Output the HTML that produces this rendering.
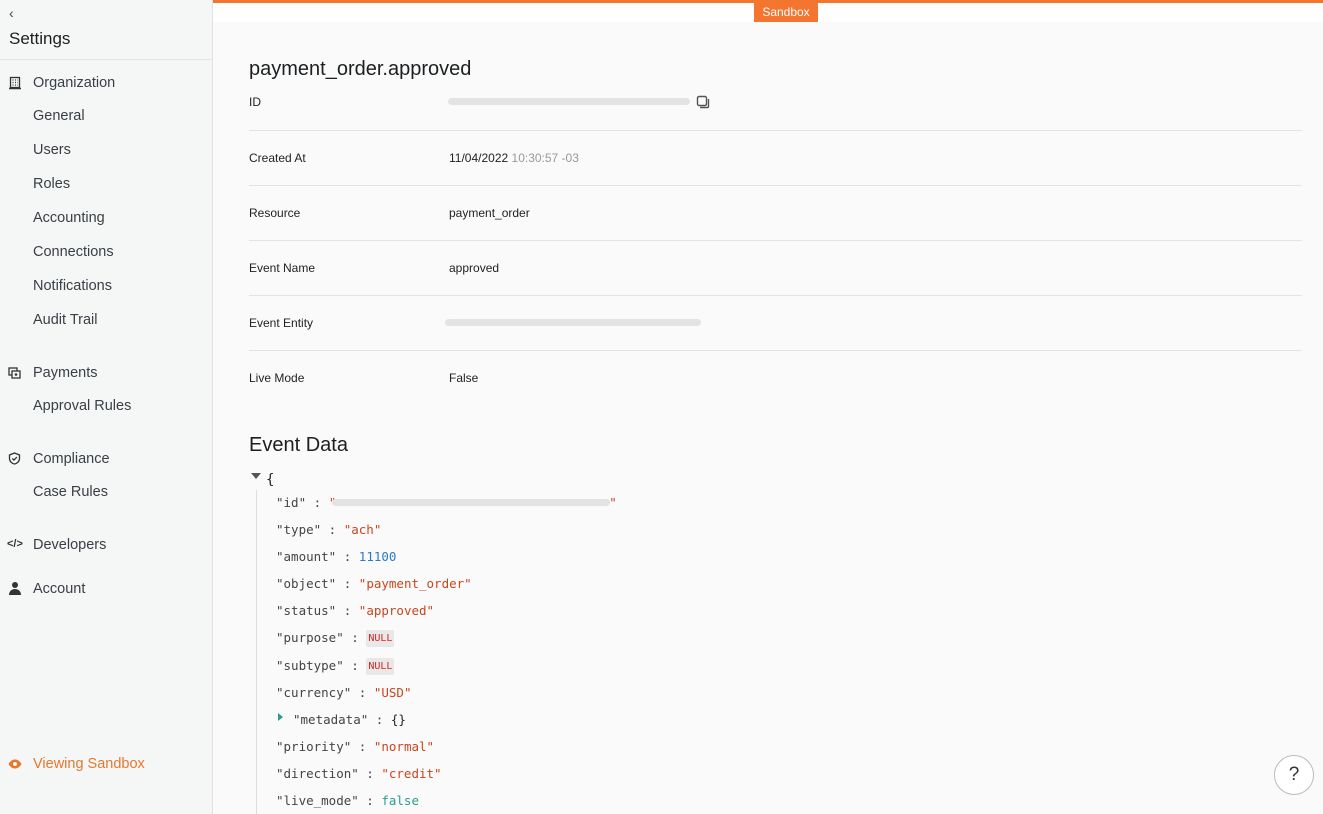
<!DOCTYPE html>
<html style="width:1323px;height:814px;overflow:hidden"><head><meta charset="utf-8"><style>
*{margin:0;padding:0;box-sizing:border-box}
body{width:1323px;height:814px;overflow:hidden;font-family:"Liberation Sans",sans-serif;background:#fafafa;position:relative;color:#222}
.side{position:absolute;left:0;top:0;width:213px;height:814px;background:#f5f6f6;border-right:1px solid #dfe2e3}
.side .back{position:absolute;left:9px;top:5px;font-size:14px;color:#444}
.side h1{position:absolute;left:9px;top:29px;font-size:17px;font-weight:normal;color:#1c1f21}
.side .hr{position:absolute;left:0;top:59px;width:212px;border-top:1px solid #e2e5e6}
.it{position:absolute;left:33px;font-size:14.5px;color:#3a3f44}
.ic{position:absolute;left:8px}
.top{position:absolute;left:213px;top:0;right:0;height:22px;background:#fff;border-top:3px solid #f47530}
.badge{position:absolute;left:754px;top:3px;width:64px;height:19px;background:#f47530;color:#fff;font-size:12px;text-align:center;line-height:18px}
.title{position:absolute;left:249px;top:58px;font-size:20px;color:#1c1f21}
.row{position:absolute;left:249px;width:1053px;font-size:12px;color:#222}
.row .v{position:absolute;left:200px;top:0}
.line{position:absolute;left:249px;width:1053px;border-top:1px solid #e3e3e3}
.blur{position:absolute;height:7px;border-radius:4px;background:#e3e3e3}
.ed{position:absolute;left:249px;top:434px;font-size:20px;color:#1c1f21}
.j{position:absolute;left:276px;font-family:"DejaVu Sans Mono","Liberation Mono",monospace;font-size:12.5px;color:#444;white-space:pre}
.s{color:#c8461e}.n{color:#2a7ac8}.b{color:#2a9d8f}
.null{display:inline-block;background:#e8e8e8;color:#d22;font-size:10px;padding:3px 2px;border-radius:2px;vertical-align:1px}
.vline{position:absolute;left:256px;top:490px;height:330px;border-left:1px solid #ddd}
.help{position:absolute;left:1274px;top:755px;width:40px;height:40px;border-radius:50%;border:1px solid #bbb;background:#fff;text-align:center;line-height:38px;font-size:19px;color:#333}
</style></head><body>
<div class="side">
<div class="back">‹</div>
<h1>Settings</h1>
<div class="hr"></div>
<svg class="ic" style="top:76px" width="14" height="14" viewBox="0 0 14 14"><rect x="2.5" y="1.5" width="9" height="10" fill="none" stroke="#333" stroke-width="1.3"/><path d="M4.5 4h1M7 4h1M9 4h.5M4.5 6.5h1M7 6.5h1M9 6.5h.5M4.5 9h1M7 9h1M9 9h.5" stroke="#333" stroke-width="1.3"/><path d="M1 12.5h12" stroke="#333" stroke-width="1.5"/></svg>
<div class="it" style="top:75px">Organization</div>
<div class="it" style="top:108px">General</div>
<div class="it" style="top:142px">Users</div>
<div class="it" style="top:176px">Roles</div>
<div class="it" style="top:210px">Accounting</div>
<div class="it" style="top:244px">Connections</div>
<div class="it" style="top:278px">Notifications</div>
<div class="it" style="top:312px">Audit Trail</div>
<svg class="ic" style="top:367px" width="14" height="13" viewBox="0 0 14 13"><rect x="1" y="1" width="8" height="7" fill="none" stroke="#333" stroke-width="1.3"/><rect x="4" y="4" width="8" height="7" fill="#f5f6f6" stroke="#333" stroke-width="1.3"/><circle cx="8" cy="7.5" r="1.3" fill="#333"/></svg>
<div class="it" style="top:365px">Payments</div>
<div class="it" style="top:398px">Approval Rules</div>
<svg class="ic" style="top:452px" width="13" height="13" viewBox="0 0 13 13"><path d="M6.5 1L11.5 3v3.5c0 3-2.5 5-5 5.5-2.5-.5-5-2.5-5-5.5V3z" fill="none" stroke="#333" stroke-width="1.3"/><path d="M4.3 6.5l1.6 1.6 3-3" fill="none" stroke="#333" stroke-width="1.3"/></svg>
<div class="it" style="top:451px">Compliance</div>
<div class="it" style="top:484px">Case Rules</div>
<div style="position:absolute;left:7px;top:538px;font-size:11px;font-weight:bold;color:#333">&lt;/&gt;</div>
<div class="it" style="top:537px">Developers</div>
<svg class="ic" style="top:581px" width="14" height="14" viewBox="0 0 14 14"><circle cx="7" cy="4" r="3" fill="#333"/><path d="M1 14c0-4 3-6 6-6s6 2 6 6z" fill="#333"/></svg>
<div class="it" style="top:581px">Account</div>
<svg class="ic" style="top:759px" width="14" height="10" viewBox="0 0 14 10"><path d="M0.5 5C2.5 1.5 5 0.5 7 0.5s4.5 1 6.5 4.5C11.5 8.5 9 9.5 7 9.5S2.5 8.5.5 5z" fill="#e8772e"/><circle cx="7" cy="5" r="2" fill="#f5f6f6"/></svg>
<div class="it" style="top:756px;color:#e8772e">Viewing Sandbox</div>
</div>
<div class="top"></div>
<div class="badge">Sandbox</div>
<div class="title">payment_order.approved</div>
<div class="row" style="top:95px">ID<div class="blur" style="left:199px;top:3px;width:242px"></div>
<svg style="position:absolute;left:447px;top:0" width="14" height="14" viewBox="0 0 14 14"><rect x="1.5" y="1.5" width="9" height="9" rx="1.5" fill="none" stroke="#555" stroke-width="1.4"/><path d="M12.5 4v7.5a1 1 0 0 1-1 1H4" fill="none" stroke="#555" stroke-width="1.4"/></svg></div>
<div class="line" style="top:130px"></div>
<div class="row" style="top:151px">Created At<div class="v">11/04/2022 <span style="color:#999">10:30:57 -03</span></div></div>
<div class="line" style="top:185px"></div>
<div class="row" style="top:206px">Resource<div class="v">payment_order</div></div>
<div class="line" style="top:240px"></div>
<div class="row" style="top:261px">Event Name<div class="v">approved</div></div>
<div class="line" style="top:295px"></div>
<div class="row" style="top:316px">Event Entity<div class="blur" style="left:196px;top:3px;width:256px"></div></div>
<div class="line" style="top:350px"></div>
<div class="row" style="top:371px">Live Mode<div class="v">False</div></div>
<div class="ed">Event Data</div>
<div style="position:absolute;left:251px;top:473px;width:0;height:0;border-left:5px solid transparent;border-right:5px solid transparent;border-top:6px solid #555"></div>
<div class="j" style="left:266px;top:472px;color:#222;font-size:14px">{</div>
<div class="vline"></div>
<div class="j" style="top:495px">"id" : <span class="s">"</span><span style="display:inline-block;width:273px"></span><span class="s">"</span></div>
<div class="blur" style="left:332px;top:499px;width:278px"></div>
<div class="j" style="top:522px">"type" : <span class="s">"ach"</span></div>
<div class="j" style="top:549px">"amount" : <span class="n">11100</span></div>
<div class="j" style="top:576px">"object" : <span class="s">"payment_order"</span></div>
<div class="j" style="top:603px">"status" : <span class="s">"approved"</span></div>
<div class="j" style="top:630px">"purpose" : <span class="null">NULL</span></div>
<div class="j" style="top:658px">"subtype" : <span class="null">NULL</span></div>
<div class="j" style="top:685px">"currency" : <span class="s">"USD"</span></div>
<div style="position:absolute;left:278px;top:713px;width:0;height:0;border-top:4px solid transparent;border-bottom:4px solid transparent;border-left:5px solid #2a9d8f"></div>
<div class="j" style="left:293px;top:712px">"metadata" : <span style="color:#222">{}</span></div>
<div class="j" style="top:739px">"priority" : <span class="s">"normal"</span></div>
<div class="j" style="top:766px">"direction" : <span class="s">"credit"</span></div>
<div class="j" style="top:793px">"live_mode" : <span class="b">false</span></div>
<div class="help">?</div>
</body></html>
